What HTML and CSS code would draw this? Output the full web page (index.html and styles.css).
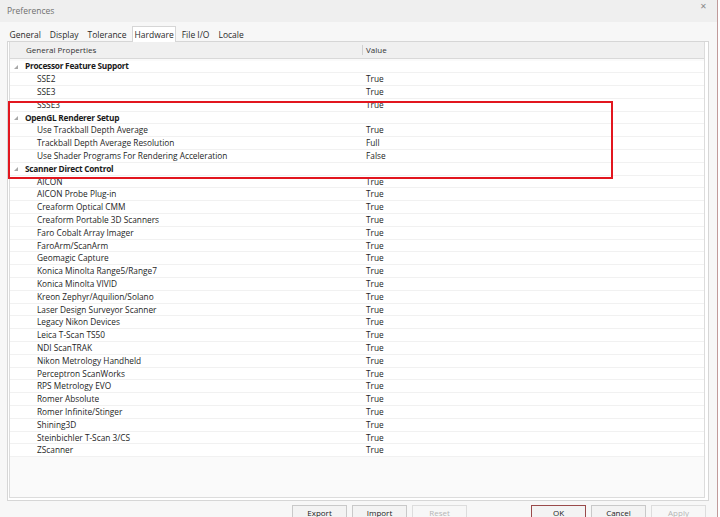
FILE: index.html
```html
<!DOCTYPE html>
<html>
<head>
<meta charset="utf-8">
<link rel="stylesheet" href="styles.css">
</head>
<body>
<div class="window">
  <div class="titlebar">
    <span class="title">Preferences</span>
    <span class="close">✕</span>
  </div>
  <div class="tabs">
    <span class="tab">General</span>
    <span class="tab">Display</span>
    <span class="tab">Tolerance</span>
    <span class="tab active">Hardware</span>
    <span class="tab">File I/O</span>
    <span class="tab">Locale</span>
  </div>
  <div class="panel">
    <div class="list">
      <div class="header">
        <div class="hname">General Properties</div>
        <div class="hvalue">Value</div>
      </div>
      <div class="rows">
        <div class="row group"><div class="name"><span class="tri"></span>Processor Feature Support</div><div class="value"></div></div>
        <div class="row"><div class="name">SSE2</div><div class="value">True</div></div>
        <div class="row"><div class="name">SSE3</div><div class="value">True</div></div>
        <div class="row"><div class="name">SSSE3</div><div class="value">True</div></div>
        <div class="row group"><div class="name"><span class="tri"></span>OpenGL Renderer Setup</div><div class="value"></div></div>
        <div class="row"><div class="name">Use Trackball Depth Average</div><div class="value">True</div></div>
        <div class="row"><div class="name">Trackball Depth Average Resolution</div><div class="value">Full</div></div>
        <div class="row"><div class="name">Use Shader Programs For Rendering Acceleration</div><div class="value">False</div></div>
        <div class="row group"><div class="name"><span class="tri"></span>Scanner Direct Control</div><div class="value"></div></div>
        <div class="row"><div class="name">AICON</div><div class="value">True</div></div>
        <div class="row"><div class="name">AICON Probe Plug-in</div><div class="value">True</div></div>
        <div class="row"><div class="name">Creaform Optical CMM</div><div class="value">True</div></div>
        <div class="row"><div class="name">Creaform Portable 3D Scanners</div><div class="value">True</div></div>
        <div class="row"><div class="name">Faro Cobalt Array Imager</div><div class="value">True</div></div>
        <div class="row"><div class="name">FaroArm/ScanArm</div><div class="value">True</div></div>
        <div class="row"><div class="name">Geomagic Capture</div><div class="value">True</div></div>
        <div class="row"><div class="name">Konica Minolta Range5/Range7</div><div class="value">True</div></div>
        <div class="row"><div class="name">Konica Minolta VIVID</div><div class="value">True</div></div>
        <div class="row"><div class="name">Kreon Zephyr/Aquilion/Solano</div><div class="value">True</div></div>
        <div class="row"><div class="name">Laser Design Surveyor Scanner</div><div class="value">True</div></div>
        <div class="row"><div class="name">Legacy Nikon Devices</div><div class="value">True</div></div>
        <div class="row"><div class="name">Leica T-Scan TS50</div><div class="value">True</div></div>
        <div class="row"><div class="name">NDI ScanTRAK</div><div class="value">True</div></div>
        <div class="row"><div class="name">Nikon Metrology Handheld</div><div class="value">True</div></div>
        <div class="row"><div class="name">Perceptron ScanWorks</div><div class="value">True</div></div>
        <div class="row"><div class="name">RPS Metrology EVO</div><div class="value">True</div></div>
        <div class="row"><div class="name">Romer Absolute</div><div class="value">True</div></div>
        <div class="row"><div class="name">Romer Infinite/Stinger</div><div class="value">True</div></div>
        <div class="row"><div class="name">Shining3D</div><div class="value">True</div></div>
        <div class="row"><div class="name">Steinbichler T-Scan 3/CS</div><div class="value">True</div></div>
        <div class="row"><div class="name">ZScanner</div><div class="value">True</div></div>
      </div>
    </div>
  </div>
  <div class="buttons">
    <div class="btn-group">
      <span class="btn">Export</span>
      <span class="btn">Import</span>
      <span class="btn disabled">Reset</span>
    </div>
    <div class="btn-group">
      <span class="btn default">OK</span>
      <span class="btn">Cancel</span>
      <span class="btn disabled">Apply</span>
    </div>
  </div>
  <div class="highlight"></div>
</div>
</body>
</html>
```
FILE: styles.css
```css
html, body {
  margin: 0;
  padding: 0;
  background: #ffffff;
}
body {
  font-family: "Open Sans", "Noto Sans", sans-serif;
  font-size: 8px;
  color: #1e1e1e;
}
.window {
  position: relative;
  width: 717px;
  height: 517px;
  border-right: 1px solid #c19a9a;
  background: #f7f7f7;
  display: flex;
  flex-direction: column;
  overflow: hidden;
}
.titlebar {
  height: 22px;
  flex: none;
  background: #efefef;
  display: flex;
  justify-content: space-between;
  padding: 0 10px 0 7px;
}
.title {
  font-size: 8.5px;
  color: #707070;
  line-height: 21px;
}
.close {
  font-size: 8px;
  color: #8a8a8a;
  line-height: 11px;
}
.tabs {
  display: flex;
  padding-left: 5px;
  margin-top: 4px;
  height: 15px;
  flex: none;
  position: relative;
  z-index: 1;
}
.tab {
  font-size: 8.5px;
  color: #2a2a2a;
  line-height: 15px;
  padding: 0 3.5px;
  border: 1px solid transparent;
  border-bottom: none;
  box-sizing: border-box;
  height: 16px;
}
.tab.active {
  background: #ffffff;
  border-color: #d6d6d6;
  padding: 0 1.5px;
  margin: 0 1px;
}
.panel {
  margin-left: 7px;
  width: 702px;
  height: 460px;
  flex: none;
  box-sizing: border-box;
  border: 1px solid #d6d6d6;
  background: #ffffff;
  padding: 0 3px 2px 1px;
}
.list {
  height: 100%;
  box-sizing: border-box;
  border: 1px solid #dcdcdc;
  border-top: none;
  background: #fafafa;
  display: flex;
  flex-direction: column;
}
.header {
  display: flex;
  height: 17px;
  flex: none;
  box-sizing: border-box;
  background: #f0f0f0;
  border-bottom: 1px solid #d9d9d9;
  color: #333333;
  line-height: 16px;
}
.hname {
  width: 352px;
  padding-left: 16px;
  box-sizing: border-box;
}
.hvalue {
  flex: 1;
  padding-left: 4px;
  position: relative;
}
.hvalue::before {
  content: "";
  position: absolute;
  left: 0;
  top: 3px;
  height: 10px;
  border-left: 1px solid #d0d0d0;
}
.rows {
  display: flex;
  flex-direction: column;
  padding-top: 1.5px;
}
.row {
  display: flex;
  height: 12.8px;
  box-sizing: border-box;
  border-bottom: 1px solid #f1f1f1;
  background: #ffffff;
  line-height: 12px;
  white-space: nowrap;
  font-size: 8.3px;
}
.name {
  width: 352px;
  padding-left: 27px;
  box-sizing: border-box;
  overflow: hidden;
}
.group .name {
  font-weight: bold;
  letter-spacing: -0.25px;
  padding-left: 3px;
  display: flex;
  align-items: center;
  color: #1a1a1a;
}
.tri {
  width: 0;
  height: 0;
  border-style: solid;
  border-width: 0 0 4px 4px;
  border-color: transparent transparent #a8a8a8 transparent;
  margin: 1px 7px 0 1px;
}
.value {
  flex: 1;
  padding-left: 4px;
}
.buttons {
  display: flex;
  margin-top: 4px;
  padding-left: 292px;
  gap: 64px;
}
.btn-group {
  display: flex;
  gap: 5px;
}
.btn {
  width: 55px;
  height: 12px;
  box-sizing: border-box;
  border: 1px solid #c9c9c9;
  border-bottom: none;
  background: #f3f3f3;
  text-align: center;
  padding-top: 2px;
  line-height: 10px;
  color: #222222;
  font-size: 8px;
}
.btn.default {
  border-color: #9a4a4a;
}
.btn.disabled {
  color: #b5b5b5;
  border-color: #dddddd;
  background: #f7f7f7;
}
.highlight {
  position: absolute;
  left: 8px;
  top: 101px;
  width: 605px;
  height: 78px;
  box-sizing: border-box;
  border: 2px solid #e2161f;
}
```
